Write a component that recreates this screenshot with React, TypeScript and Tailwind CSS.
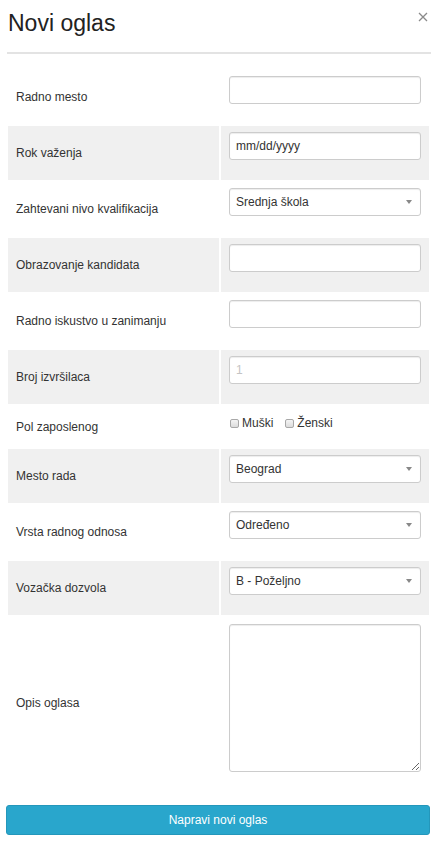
import React from "react";

const Input = ({ text, placeholder }: { text?: string; placeholder?: boolean }) => (
  <div className="h-[28px] w-full rounded-[3px] border border-[#cccccc] bg-white pl-[6px] text-[12px] leading-[26px] shadow-[inset_0_1px_1px_rgba(0,0,0,0.075)]">
    <span className={placeholder ? "text-[#c4c4c4]" : "text-[#333]"}>{text}</span>
  </div>
);

const Select = ({ text }: { text: string }) => (
  <div className="flex h-[28px] w-full items-center justify-between rounded-[3px] border border-[#cccccc] bg-white pl-[6px] pr-[8px] text-[12px] text-[#333] shadow-[inset_0_1px_1px_rgba(0,0,0,0.075)]">
    <span>{text}</span>
    <svg width="6" height="4" viewBox="0 0 6 4">
      <path d="M0 0 L6 0 L3 4 Z" fill="#888" />
    </svg>
  </div>
);

const Check = ({ label }: { label: string }) => (
  <span className="flex items-center gap-[3px]">
    <span className="inline-block h-[9px] w-[9px] rounded-[2px] border border-[#a8a8a8] bg-gradient-to-b from-[#f4f4f4] to-[#dcdcdc]" />
    <span>{label}</span>
  </span>
);

type Row = { label: string; gray: boolean; h?: string; content: React.ReactNode };

export default function App() {
  const rows: Row[] = [
    { label: "Radno mesto", gray: false, content: <Input /> },
    { label: "Rok važenja", gray: true, content: <Input text="mm/dd/yyyy" /> },
    { label: "Zahtevani nivo kvalifikacija", gray: false, content: <Select text="Srednja škola" /> },
    { label: "Obrazovanje kandidata", gray: true, content: <Input /> },
    { label: "Radno iskustvo u zanimanju", gray: false, content: <Input /> },
    { label: "Broj izvršilaca", gray: true, content: <Input text="1" placeholder /> },
    {
      label: "Pol zaposlenog",
      gray: false,
      h: "h-[41px]",
      content: (
        <div className="flex gap-[12px] pl-[1px] pt-[4px] text-[12px] leading-[14px] text-[#333]">
          <Check label="Muški" />
          <Check label="Ženski" />
        </div>
      ),
    },
    { label: "Mesto rada", gray: true, content: <Select text="Beograd" /> },
    { label: "Vrsta radnog odnosa", gray: false, content: <Select text="Određeno" /> },
    { label: "Vozačka dozvola", gray: true, content: <Select text="B - Poželjno" /> },
  ];

  return (
    <div className="w-[438px] min-h-[846px] bg-white font-['Liberation_Sans',Arial,sans-serif] text-[#333]">
      <div className="flex h-[52px] items-start justify-between pl-[8px] pr-[10px] pt-[9px]">
        <h2 className="text-[23px] leading-[28px] text-[#222]">Novi oglas</h2>
        <svg width="10" height="10" viewBox="0 0 10 10" className="mt-[3px]">
          <path d="M1 1 L9 9 M9 1 L1 9" stroke="#8a8a8a" strokeWidth="1.3" />
        </svg>
      </div>
      <div className="mx-[7px] h-[2px] bg-[#e3e3e3]" />
      <div className="grid grid-cols-[211px_208px] gap-[2px] pl-[8px] pt-[16px]">
        {rows.map((r) => (
          <React.Fragment key={r.label}>
            <div className={`flex items-center pl-[8px] text-[12px] ${r.h ?? "h-[54px]"} ${r.gray ? "bg-[#f0f0f0]" : ""}`}>
              {r.label}
            </div>
            <div className={`px-[8px] pt-[6px] ${r.h ?? "h-[54px]"} ${r.gray ? "bg-[#f0f0f0]" : ""}`}>{r.content}</div>
          </React.Fragment>
        ))}
        <div className="flex h-[172px] items-center pl-[8px] text-[12px]">Opis oglasa</div>
        <div className="px-[8px] pt-[7px]">
          <textarea
            readOnly
            className="block h-[148px] w-full resize rounded-[3px] border border-[#cccccc] bg-white shadow-[inset_0_1px_1px_rgba(0,0,0,0.075)] outline-none"
          />
        </div>
      </div>
      <div className="px-[6px] pt-[16px]">
        <div className="flex h-[30px] w-[424px] items-center justify-center rounded-[3px] border border-[#2497bb] bg-[#29a6cc] text-[12px] text-white">
          Napravi novi oglas
        </div>
      </div>
    </div>
  );
}
